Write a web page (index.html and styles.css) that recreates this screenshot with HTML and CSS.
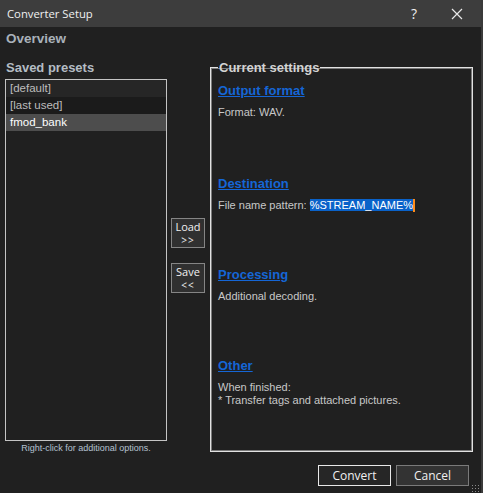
FILE: index.html
```html
<!DOCTYPE html>
<html lang="en">
  <head>
    <meta charset="UTF-8" />
    <meta name="viewport" content="width=device-width, initial-scale=1.0" />
    <title>Converter Setup</title>
    <link rel="stylesheet" href="styles.css">
  </head>
  <body>
    <div class="window">
      <div class="titlebar">
        <span class="title">Converter Setup</span>
        <span class="title-help">?</span>
        <span class="title-close">
          <svg width="12" height="12" viewBox="0 0 12 12"><path d="M1 1L11 11M11 1L1 11" stroke="#e8e8e8" stroke-width="1.2" fill="none"/></svg>
        </span>
      </div>

      <h1 class="overview">Overview</h1>

      <div class="main">
        <div class="presets">
          <h2 class="label">Saved presets</h2>
          <ul class="preset-list">
            <li class="row-a">[default]</li>
            <li class="row-b">[last used]</li>
            <li class="selected">fmod_bank</li>
          </ul>
          <div class="hint">Right-click for additional options.</div>
        </div>

        <div class="transfer">
          <button class="small-btn"><span>Load</span><span>&gt;&gt;</span></button>
          <button class="small-btn"><span>Save</span><span>&lt;&lt;</span></button>
        </div>

        <fieldset class="settings">
          <legend>Current settings</legend>
          <div class="section first">
            <a class="link">Output format</a>
            <p>Format: WAV.</p>
          </div>
          <div class="section">
            <a class="link">Destination</a>
            <p>File name pattern: <span class="sel">%STREAM_NAME%</span><span class="caret"></span></p>
          </div>
          <div class="section">
            <a class="link">Processing</a>
            <p>Additional decoding.</p>
          </div>
          <div class="section">
            <a class="link">Other</a>
            <p>When finished:<br>* Transfer tags and attached pictures.</p>
          </div>
        </fieldset>
      </div>

      <div class="footer">
        <button class="btn default">Convert</button>
        <button class="btn">Cancel</button>
        <span class="grip"></span>
      </div>
    </div>
  </body>
</html>
```

FILE: styles.css
```css
* {
  margin: 0;
  padding: 0;
  box-sizing: border-box;
}

body {
  background-color: #202020;
  font-family: "Liberation Sans", Arial, sans-serif;
  color: #c8c8c8;
}

.window {
  position: relative;
  width: 483px;
  height: 493px;
  border-right: 2px solid #3a3a3a;
  background-color: #202020;
  overflow: hidden;
}

.titlebar {
  height: 27px;
  background-color: #3d3d3d;
  display: flex;
  align-items: center;
  padding-left: 7px;
  color: #f0f0f0;
  font-family: "Open Sans", sans-serif;
  font-size: 11.3px;
}

.title {
  flex: 1;
}

.title-help {
  width: 16px;
  margin-right: 29px;
  font-size: 14px;
  text-align: center;
}

.title-close {
  width: 14px;
  margin-right: 16px;
  display: flex;
  align-items: center;
}

.overview {
  font-size: 13.5px;
  font-weight: bold;
  color: #a9b1ba;
  padding: 4px 0 0 6px;
  height: 33px;
}

.main {
  display: flex;
  padding-left: 5px;
}

.presets {
  width: 162px;
}

.label {
  font-size: 13px;
  font-weight: bold;
  color: #b4bcc4;
  padding-left: 1px;
  height: 19px;
  line-height: 15px;
}

.preset-list {
  list-style: none;
  height: 362px;
  border: 1px solid #c4c4c4;
  font-size: 11.5px;
}

.preset-list li {
  height: 17px;
  line-height: 17px;
  padding-left: 4px;
  color: #bdbdbd;
}

.preset-list .row-a {
  background-color: #262626;
}

.preset-list .row-b {
  background-color: #1b1b1b;
}

.preset-list .selected {
  background-color: #4d4d4d;
  color: #ffffff;
}

.hint {
  font-size: 9px;
  color: #b4c0d0;
  text-align: center;
  margin-top: 2px;
}

.transfer {
  width: 34px;
  margin-left: 4px;
  padding-top: 158px;
  display: flex;
  flex-direction: column;
  gap: 15px;
}

.small-btn {
  width: 34px;
  height: 30px;
  background-color: #303030;
  border: 1px solid #858585;
  color: #f0f0f0;
  font-family: "Open Sans", sans-serif;
  font-size: 11px;
  display: flex;
  flex-direction: column;
  align-items: center;
  justify-content: center;
}

.small-btn span {
  display: block;
  height: 13px;
  line-height: 13px;
}

.small-btn span + span {
  font-size: 10px;
  letter-spacing: 1px;
  margin-top: 1px;
}

.settings {
  width: 263px;
  height: 392px;
  margin-left: 5px;
  border: 1px solid #e2e2e2;
  box-shadow: inset 0 0 0 1px #7a7a7a;
  padding: 0 7px;
}

.settings legend {
  font-size: 13px;
  font-weight: bold;
  color: #d4d4d4;
  padding: 0 1px;
  line-height: 15px;
}

.section {
  height: 91px;
}

.section.first {
  height: 93px;
}

.link {
  display: inline-block;
  font-size: 13px;
  font-weight: bold;
  color: #1566d6;
  text-decoration: underline;
  margin-top: 8px;
}

.section p {
  font-size: 11px;
  line-height: 13px;
  margin-top: 7px;
  color: #c8c8c8;
}

.sel {
  background-color: #0a62c9;
  color: #ffffff;
}

.caret {
  display: inline-block;
  width: 2px;
  height: 13px;
  vertical-align: top;
  background-color: #ff8c1a;
}

.footer {
  display: flex;
  justify-content: flex-end;
  gap: 5px;
  padding: 12px 12px 0 0;
}

.btn {
  width: 73px;
  height: 21px;
  background-color: #333333;
  border: 1px solid #7a7a7a;
  color: #f0f0f0;
  font-family: "Open Sans", sans-serif;
  font-size: 12px;
}

.btn.default {
  border-color: #e8e8e8;
  background-color: #262626;
}

.grip {
  position: absolute;
  right: 2px;
  bottom: 1px;
  width: 8px;
  height: 8px;
  background-image: radial-gradient(circle, #8a8a8a 0.9px, transparent 1px);
  background-size: 3px 3px;
}
```
